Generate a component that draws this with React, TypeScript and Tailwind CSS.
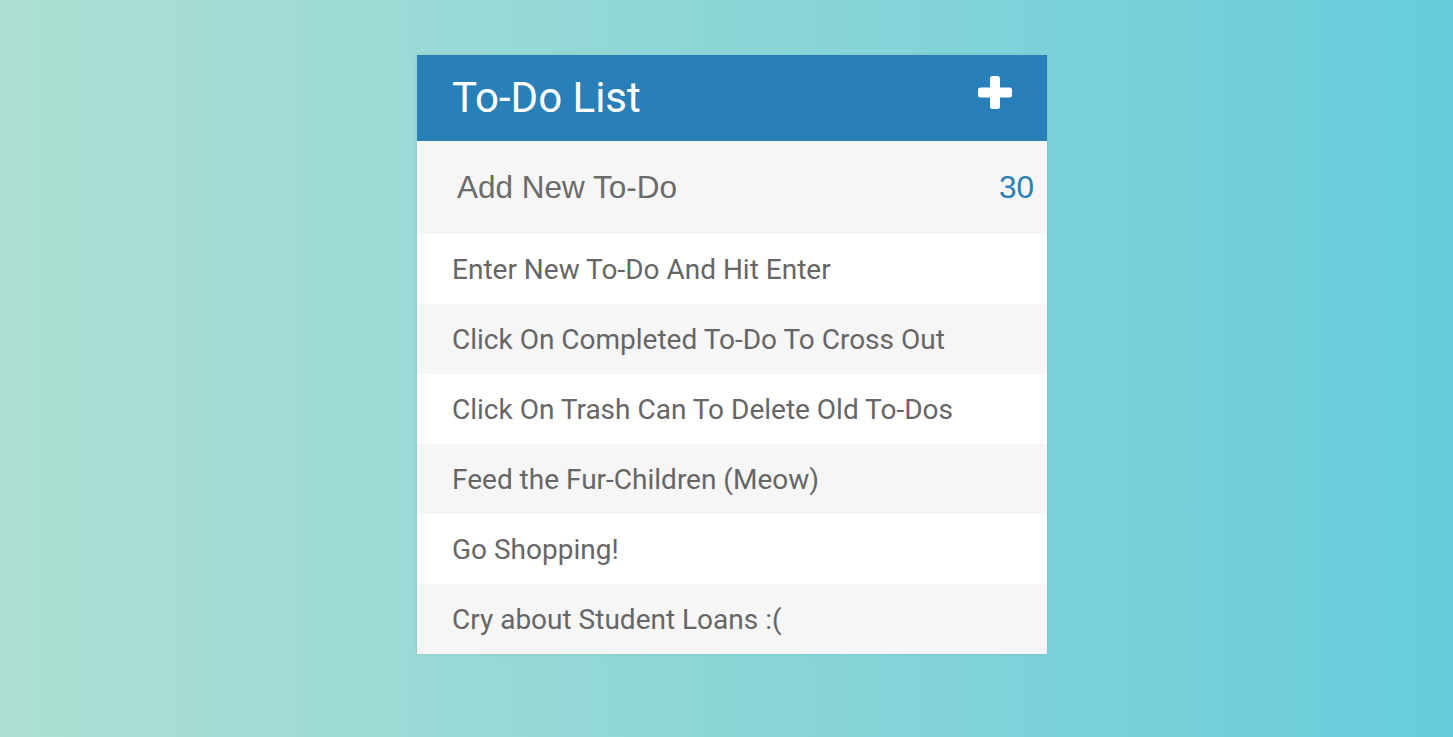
const todos = [
  "Enter New To-Do And Hit Enter",
  "Click On Completed To-Do To Cross Out",
  "Click On Trash Can To Delete Old To-Dos",
  "Feed the Fur-Children (Meow)",
  "Go Shopping!",
  "Cry about Student Loans :(",
];

function PlusIcon() {
  return (
    <svg width="34" height="33" viewBox="0 0 34 33" fill="white">
      <rect x="0" y="11.5" width="34" height="10" rx="2.5" />
      <rect x="12" y="0" width="10" height="33" rx="2.5" />
    </svg>
  );
}

export default function App() {
  return (
    <div className="min-h-screen w-full bg-gradient-to-r from-[#addfd3] to-[#66ccdb] pl-[11px] pt-[55px] font-['Roboto',sans-serif]">
      <div className="mx-auto w-[630px] bg-white shadow-[0_0_3px_rgba(0,0,0,0.1)]">
        <div className="flex h-[86px] items-start justify-between bg-[#2980b9] pl-[35px] pr-[35px]">
          <h1 className="mt-[18px] text-[42px] leading-[50px] font-normal text-white">To-Do List</h1>
          <div className="mt-[21px]">
            <PlusIcon />
          </div>
        </div>
        <div className="flex h-[93px] items-center justify-between bg-[#f6f6f6] pl-[40px] pr-[13px] font-['Liberation_Sans',Arial,sans-serif] text-[31.5px]">
          <span className="text-[#6b6b6b]">Add New To-Do</span>
          <span className="text-[#2980b9]">30</span>
        </div>
        <ul>
          {todos.map((t, i) => (
            <li
              key={t}
              className={`flex h-[70px] items-center pl-[35px] pt-[2px] text-[28px] text-[#666] ${i % 2 === 1 ? "bg-[#f6f6f6]" : "bg-white"}`}
            >
              {t}
            </li>
          ))}
        </ul>
      </div>
    </div>
  );
}
